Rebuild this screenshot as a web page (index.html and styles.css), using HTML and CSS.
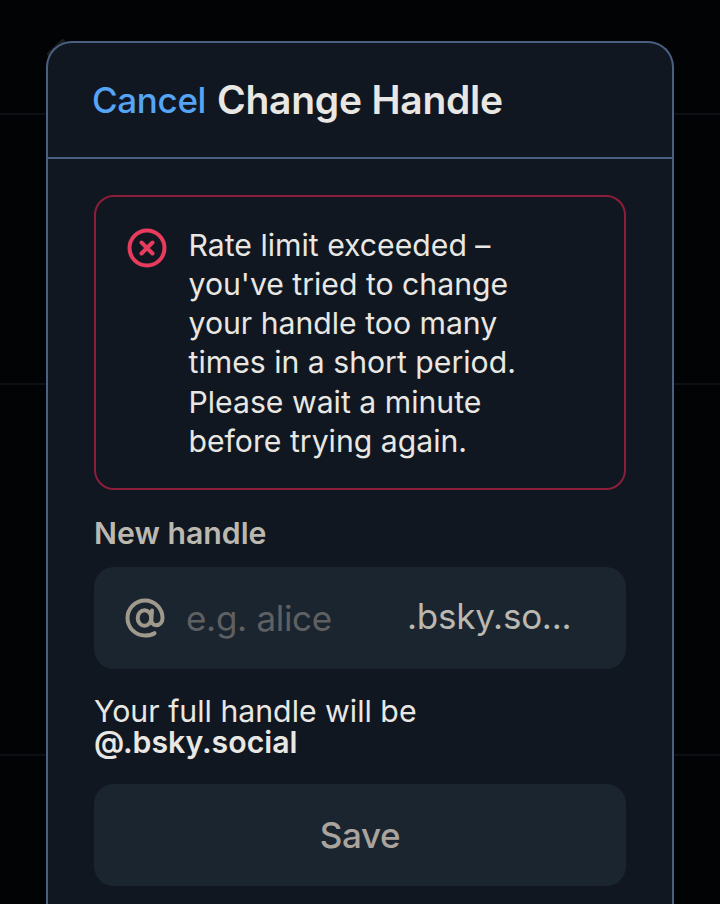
FILE: index.html
```html
<!DOCTYPE html>
<html lang="en">
<head>
<meta charset="utf-8">
<title>Change Handle</title>
<link rel="stylesheet" href="styles.css">
</head>
<body>
<div class="backdrop"><svg class="back-arrow" viewBox="0 0 20 20"><path d="M2 18L16 5" stroke="currentColor" stroke-width="4" stroke-linecap="round"/></svg><div class="row first"></div><div class="row second"></div><div class="row third"></div></div>
<main class="dialog">
  <header class="header">
    <button class="cancel">Cancel</button>
    <h1 class="title">Change Handle</h1>
  </header>
  <div class="content">
    <div class="alert">
      <svg class="alert-icon" viewBox="0 0 40 40" fill="none" stroke="currentColor" stroke-width="4"><circle cx="20" cy="20" r="17.5"/><path d="M14.500 14.500l11 11M25.500 14.500l-11 11" stroke-linecap="round"/></svg>
      <p class="alert-text">Rate limit exceeded –<br>you've tried to change<br>your handle too many<br>times in a short period.<br>Please wait a minute<br>before trying again.</p>
    </div>
    <div class="label">New handle</div>
    <div class="field">
      <svg class="at" viewBox="0 0 40 40" fill="none" stroke="currentColor" stroke-width="4" stroke-linecap="round" stroke-linejoin="round"><ellipse cx="19.500" cy="20" rx="6.800" ry="7.800"/><path d="M27 12.500L26.300 21C26 25 28 27.200 31 27.200C35 27.200 37.500 24 37.500 20A17.500 17.500 0 1 0 20 37.500C24.500 37.500 27 36.800 29.500 35.200"/></svg>
      <span class="placeholder">e.g. alice</span>
      <span class="suffix">.bsky.so...</span>
    </div>
    <p class="full">Your full handle will be<br><strong>@.bsky.social</strong></p>
    <button class="save">Save</button>
  </div>
</main>
</body>
</html>
```
FILE: styles.css
```css
* { box-sizing: border-box; }
body { margin: 0; height: 904px; overflow: hidden; background: #020305; color: #e9e7e3; font-family: Inter, sans-serif; }
button { font: inherit; border: 0; padding: 0; background: none; }
h1, p { margin: 0; }
.backdrop { position: absolute; inset: 0; }
.back-arrow { position: absolute; left: 47px; top: 36px; width: 20px; height: 20px; color: #1c1d1e; }
.row { border-bottom: 2px solid #0c1014; }
.first { height: 115px; }
.second { height: 270px; }
.third { height: 371px; }
.dialog { position: relative; width: 628px; height: 863px; margin: 41px auto 0; border: 2px solid #4a6080; border-bottom: 0; border-radius: 26px 26px 0 0; background: #101720; }
.header { height: 116px; display: flex; align-items: center; gap: 12px; padding: 0 44px; border-bottom: 2px solid #4a6080; }
.cancel { width: 113px; color: #55a4f6; font-size: 35px; font-weight: 500; letter-spacing: -.35px; text-align: left; white-space: nowrap; }
.title { margin-bottom: 1px; font-size: 39px; font-weight: 600; letter-spacing: -.25px; white-space: nowrap; }
.content { padding: 36px 46px 0; }
.alert { height: 295px; display: flex; gap: 21.500px; padding: 31px; border: 2px solid #8b1e3b; border-radius: 20px; }
.alert-icon { width: 40px; height: 40px; color: #e83c5e; flex: none; }
.alert-text { margin-top: -2px; font-size: 30.200px; line-height: 39.150px; white-space: nowrap; }
.label { margin-top: 23px; height: 40px; line-height: 40px; font-size: 30.250px; font-weight: 600; color: #bbb8b0; }
.field { height: 102px; margin-top: 14px; display: flex; align-items: center; padding: 0 31px; background: #1b2530; border-radius: 20px; }
.at { width: 40px; height: 40px; color: #a09a8d; }
.placeholder { width: 221px; margin-left: 21px; font-size: 35px; letter-spacing: -.3px; color: #5f6061; }
.suffix { margin-top: -5px; font-size: 35px; letter-spacing: -.25px; color: #bbb8b0; white-space: nowrap; }
.full { margin-top: 27px; font-size: 30.250px; line-height: 31px; }
.full strong { font-weight: 600; }
.save { display: block; width: 100%; height: 102px; margin-top: 26px; border-radius: 20px; background: #1b2530; color: #aaa49c; font-size: 35px; font-weight: 500; letter-spacing: -.3px; }
```
